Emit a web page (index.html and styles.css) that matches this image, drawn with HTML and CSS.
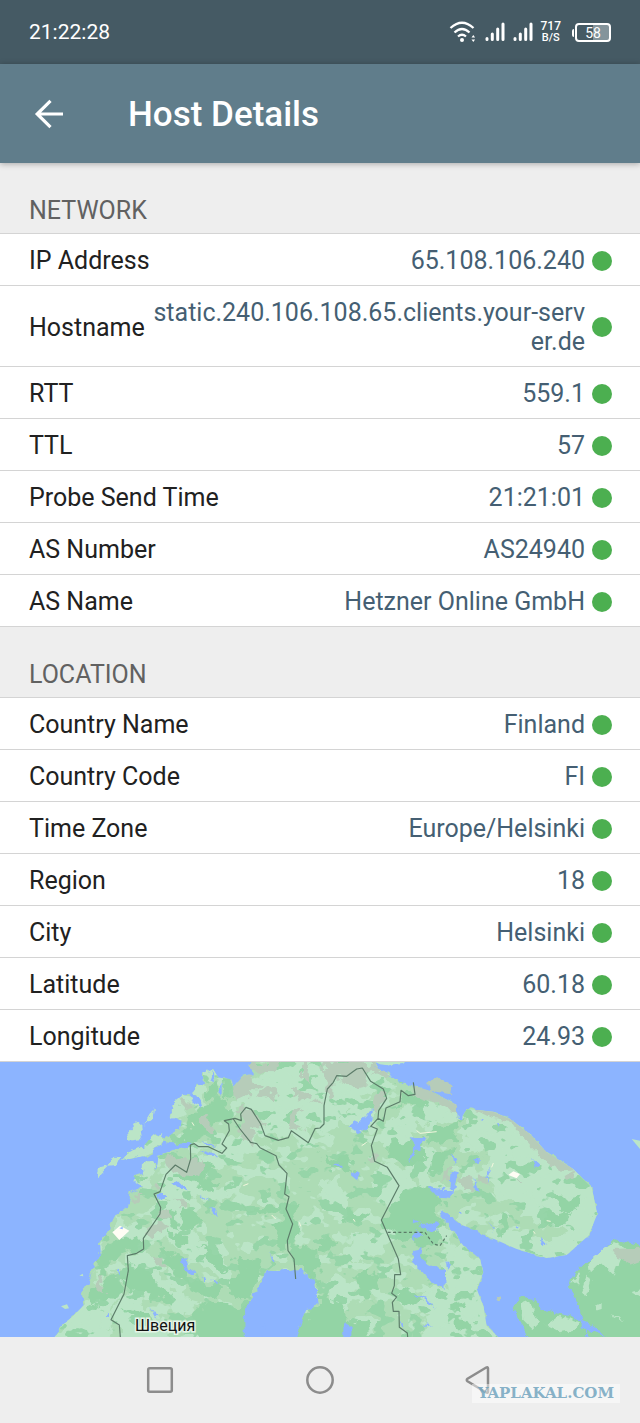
FILE: index.html
```html
<!DOCTYPE html>
<html lang="en">
<head>
<meta charset="utf-8">
<meta name="viewport" content="width=device-width, initial-scale=1">
<title>Host Details</title>
<link rel="stylesheet" href="styles.css">
</head>
<body>
<div class="screen">
  <div class="status-bar">
    <time class="clock">21:22:28</time>
    <div class="status-icons">
      <svg class="wifi" width="28" height="24" viewBox="0 0 28 24" fill="none" stroke="#fff" stroke-width="2.3" aria-label="Wi-Fi">
        <path d="M1.500 8Q13 -2.500 24.500 8M5.500 12.500Q13 5.500 20.500 12.500M9 16.500Q13 13 17 16.500"/>
        <circle cx="13" cy="20" r="2" fill="#fff" stroke="none"/>
        <path d="M22.500 17.500l1.800-2.500 1.800 2.500zM22.500 19.500l1.800 2.500 1.800-2.500z" fill="#fff" stroke="none"/>
      </svg>
      <svg class="signal" width="20" height="20" viewBox="0 0 20 20" stroke="#fff" stroke-width="3" stroke-linecap="round" aria-label="Signal 1"><path d="M2 16.500v1M7.300 12v5.500M12.700 7v10.500M18 2v15.500"/></svg>
      <svg class="signal" width="20" height="20" viewBox="0 0 20 20" stroke="#fff" stroke-width="3" stroke-linecap="round" aria-label="Signal 2"><path d="M2 16.500v1M7.300 12v5.500M12.700 7v10.500M18 2v15.500"/></svg>
      <div class="speed"><span>717</span><span class="unit">B/S</span></div>
      <div class="battery"><span>58</span></div>
    </div>
  </div>

  <header class="app-bar">
    <button class="back" type="button" aria-label="Back">
      <svg width="30" height="30" viewBox="0 0 30 30" fill="none" stroke="#fff" stroke-width="3.200"><path d="M29 15H3M16.500 1.800L3.200 15l13.300 13.200"/></svg>
    </button>
    <h1>Host Details</h1>
  </header>

  <main>
    <section>
      <h2>NETWORK</h2>
      <dl>
        <div class="row"><dt>IP Address</dt><dd>65.108.106.240</dd></div>
        <div class="row"><dt>Hostname</dt><dd>static.240.106.108.65.clients.your-server.de</dd></div>
        <div class="row"><dt>RTT</dt><dd>559.1</dd></div>
        <div class="row"><dt>TTL</dt><dd>57</dd></div>
        <div class="row"><dt>Probe Send Time</dt><dd>21:21:01</dd></div>
        <div class="row"><dt>AS Number</dt><dd>AS24940</dd></div>
        <div class="row"><dt>AS Name</dt><dd>Hetzner Online GmbH</dd></div>
      </dl>
    </section>
    <section>
      <h2>LOCATION</h2>
      <dl>
        <div class="row"><dt>Country Name</dt><dd>Finland</dd></div>
        <div class="row"><dt>Country Code</dt><dd>FI</dd></div>
        <div class="row"><dt>Time Zone</dt><dd>Europe/Helsinki</dd></div>
        <div class="row"><dt>Region</dt><dd>18</dd></div>
        <div class="row"><dt>City</dt><dd>Helsinki</dd></div>
        <div class="row"><dt>Latitude</dt><dd>60.18</dd></div>
        <div class="row"><dt>Longitude</dt><dd>24.93</dd></div>
      </dl>
    </section>
    <div class="map">
      <svg viewBox="0 9 1920 825" preserveAspectRatio="xMidYMid slice" role="img" aria-label="Map of northern Scandinavia">
        <defs>
          <!-- uneven natural edges -->
          <filter id="rough" filterUnits="userSpaceOnUse" x="0" y="0" width="1920" height="850" color-interpolation-filters="sRGB">
            <feTurbulence type="fractalNoise" baseFrequency="0.025" numOctaves="3" seed="4"/>
            <feDisplacementMap in="SourceGraphic" scale="60" xChannelSelector="R" yChannelSelector="G"/>
          </filter>
          <filter id="coast" filterUnits="userSpaceOnUse" x="0" y="0" width="1920" height="850" color-interpolation-filters="sRGB">
            <feTurbulence type="fractalNoise" baseFrequency="0.05" numOctaves="2" seed="9"/>
            <feDisplacementMap in="SourceGraphic" scale="22" xChannelSelector="R" yChannelSelector="G"/>
          </filter>
          <!-- scattered vegetation patches inside the land -->
          <filter id="meadow" filterUnits="userSpaceOnUse" x="0" y="0" width="1920" height="850" color-interpolation-filters="sRGB">
            <feTurbulence type="fractalNoise" baseFrequency="0.016 0.022" numOctaves="3" seed="12"/>
            <feColorMatrix values="0 0 0 0 .733  0 0 0 0 .898  0 0 0 0 .78  30 0 0 0 -17"/>
            <feComposite in2="SourceAlpha" operator="in"/>
          </filter>
          <filter id="forest" filterUnits="userSpaceOnUse" x="0" y="0" width="1920" height="850" color-interpolation-filters="sRGB">
            <feTurbulence type="fractalNoise" baseFrequency="0.018 0.026" numOctaves="3" seed="31"/>
            <feColorMatrix values="0 0 0 0 .588  0 0 0 0 .835  0 0 0 0 .66  0 30 0 0 -18"/>
            <feComposite in2="SourceAlpha" operator="in"/>
          </filter>
          <path id="land" d="M155 840L185 800 220 770 255 735 245 705 268 660 285 612 302 590 300 552 330 510 345 470 385 440 392 402 430 385 412 370 400 350 432 340 430 318 460 305 470 330 475 290 520 272 490 268 440 290 400 298 365 305 385 280 430 262 460 225 490 240 540 210 545 185 512 172 520 130 545 110 575 112 590 80 612 70 608 45 640 30 655 55 690 60 700 85 730 50 762 45 745 20 770 0H1125L1130 20 1195 65 1240 80 1290 95 1375 140 1380 185 1400 150 1480 158 1530 180 1590 225 1640 280 1720 330 1775 385 1792 465 1765 530 1700 588 1640 597 1550 570 1460 530 1390 500 1330 455 1318 465 1360 515 1390 560 1440 600 1450 640 1430 690 1450 740 1460 800 1500 840Z"/>
          <clipPath id="inland"><use href="#land"/></clipPath>
        </defs>
        <rect y="0" width="1920" height="840" fill="#8cb4ff"/>
        <use href="#land" fill="#addcb5" filter="url(#coast)"/>
        <!-- light lowlands -->
        <g fill="#bbe5c7" filter="url(#coast)">
          <path d="M520 130L545 108 568 130 556 165 512 180zM590 85L610 70 600 108 570 110zM610 42L640 30 652 60 625 70zM400 200L420 190 425 240 385 245 378 225zM430 200L462 148 458 180zM290 355L300 325 325 318zM325 320L340 290 362 292 350 318zM365 305L385 280 430 262 490 225 480 258 430 290zM425 320L460 305 466 340 435 385 400 365 430 345z"/>
        </g>
        <g clip-path="url(#inland)">
          <g fill="#bbe5c7" filter="url(#rough)">
            <path d="M760 60L850 0 1120 0 1180 60 1180 90 1110 110 1040 150 1020 215 960 235 930 200 840 240 800 220 780 170 700 135 730 80zM690 230L740 220 810 260 730 300 650 330 600 300zM500 300L560 310 570 340 620 390 700 400 660 430 560 400 500 420 480 370z"/>
            <path d="M480 410L560 440 600 480 580 520 640 590 710 650 690 690 620 620 560 590 500 540 430 560 450 500zM385 590L430 570 500 620 470 640 540 710 600 730 560 760 480 700 410 660 430 740 520 800 500 850H390L330 780 380 700zM270 710L340 670 360 720 320 780 345 850H160L240 750zM340 480L370 460 385 500 420 490 405 560 350 540zM280 640L300 612 315 650 300 700zM318 620L345 612 350 640 330 655z"/>
            <path d="M1390 140L1490 140 1600 220 1650 280 1740 325 1800 390 1810 470 1780 540 1690 610 1630 610 1530 580 1455 525 1480 500 1580 530 1650 550 1710 520 1640 490 1560 470 1550 430 1490 410 1450 340 1470 290 1390 260 1400 200z"/>
            <path d="M1260 120L1370 150 1380 180 1320 170 1280 200 1230 190 1240 230 1180 270 1140 240 1150 190zM1070 120L1130 150 1120 210 1060 220 1030 180zM1150 310L1230 350 1250 400 1200 470 1160 440 1120 370zM960 370L1010 360 1060 430 1020 480 970 450zM1330 590L1380 560 1460 605 1460 640 1440 690 1460 740 1490 850H1260L1290 770 1240 760 1280 700 1340 680zM1000 650L1070 670 1070 730 1030 760 990 720zM1240 260L1310 280 1330 330 1280 350zM1050 530L1110 520 1150 570 1100 610 1040 590z"/>
          </g>
          <use href="#land" filter="url(#meadow)"/>
          <use href="#land" filter="url(#forest)"/>
          <!-- forests -->
          <g fill="#93d4a5" filter="url(#rough)">
            <path d="M590 140L650 120 700 150 680 190 620 200 600 240 530 255 540 220 575 190zM620 85L650 70 655 110 625 120zM665 60L690 50 690 100 670 130zM580 300L650 320 610 360 670 380 640 400 560 370 520 350zM545 460L590 455 610 490 580 510 545 495zM310 560L350 545 410 545 405 575 360 590 315 610 320 660 290 650 300 590zM380 620L440 630 470 680 520 710 500 730 440 700 380 690zM370 740L430 760 470 800 410 790zM320 665L355 650 370 680 330 720 260 740 270 700zM730 440L780 460 800 435 850 440 830 465 780 475zM480 570L545 600 570 660 520 640zM590 560L650 600 690 650 640 620zM560 650L660 690 650 720 580 690zM480 440L520 460 535 500 500 490zM490 505L560 550 530 560z"/>
            <path d="M700 585L790 610 790 640 745 720 720 720 690 670 720 640zM860 440L900 430 880 480 905 520 870 550 955 565 960 680 925 650 880 600 850 540zM600 730L650 745 740 740 750 850H600L580 780zM915 770L960 745V850H885zM820 500L870 480 860 540 840 580z"/>
            <path d="M1165 250L1240 240 1280 290 1240 320 1165 290zM1210 400L1280 380 1330 430 1290 460 1340 490 1300 500 1340 550 1270 560 1190 530 1150 490 1170 450zM1340 190L1385 180 1370 245 1290 260 1280 230zM1300 285L1370 270 1330 330 1290 345zM1215 95L1290 100 1270 140 1190 145zM960 280L1040 300 1050 340 990 320zM1030 450L1110 470 1080 490 1030 480zM1220 690L1270 720 1250 750 1190 720zM960 700L1020 740 1040 780 1100 790 1110 850H960zM960 540L1010 550 990 580 960 570zM1350 740L1400 730 1380 760zM1060 650L1120 640 1140 690 1090 710zM1370 780L1425 790 1420 820 1370 810zM1505 465L1530 480 1510 525 1500 505zM1630 475L1710 460 1700 490 1640 500zM1660 420L1740 410 1730 450 1690 460z"/>
          </g>
          <!-- highlands -->
          <g fill="#b6ccb9" filter="url(#rough)">
            <path d="M725 9L840 9 820 40 780 38zM700 75L740 50 780 80 740 120 700 110zM715 160L760 150 800 205 750 205 760 260 725 260 735 225zM775 95L800 85 830 100 820 130 805 120 800 105 775 110zM865 155L910 150 885 185 915 200 890 225 855 210zM870 85L910 90 935 110 905 125 890 100 870 120zM900 15L920 9 930 65 900 50zM930 130L955 120 955 145zM490 300L530 290 560 310 590 310 620 300 605 350 550 345 510 330zM520 410L555 415 570 445 535 460zM470 440L515 455 510 480 475 470zM455 490L500 495 460 540 430 535zM290 640L308 670 305 700 290 690zM460 590L500 600 490 612 465 605zM390 410L425 405 400 430zM605 190L625 185 640 205 620 230zM540 135L560 125 550 150zM470 375L490 385 470 400z"/>
            <path d="M965 20L1000 12 1100 9 1200 0 1200 30 1150 50 1100 30 1100 80 1060 90 1040 60 1000 75 1000 110 980 120 975 60zM1325 345L1350 330 1345 365 1325 370zM1375 355L1410 350 1420 385 1380 390zM1435 340L1460 350 1450 380 1430 370zM1540 370L1570 375 1560 385zM1090 290L1120 280 1115 310zM1120 120L1155 115 1135 155z"/>
          </g>
          <path fill="#b6ccb9" filter="url(#coast)" d="M1240 70L1290 82 1375 125 1380 170 1330 140 1240 110zM1400 140L1490 148 1590 215 1640 270 1730 330 1680 335 1640 310 1590 260 1530 185 1470 175zM1690 345L1725 335 1720 360 1695 362z"/>
        </g>
        <path fill="#b6ccb9" filter="url(#coast)" d="M1285 75L1310 52 1355 80 1350 105 1290 95z"/>
        <!-- islands and eastern shore -->
        <path fill="#bbe5c7" d="M183 742l18-6 6 12-12 2zM238 650l10-6 2 8zM1895 240l25 5v25z"/>
        <path fill="#bbe5c7" d="M1125 9H1215L1200 24 1140 16z"/>
        <g filter="url(#coast)">
          <path fill="#93d4a5" d="M1710 680L1720 645 1760 605 1800 590 1840 543 1880 552 1940 565V850H1780L1750 795 1735 740zM1538 750L1560 712 1600 720 1625 750 1700 770 1745 785 1770 850H1590L1560 790z"/>
          <path fill="#bbe5c7" d="M1765 610L1840 550 1880 570 1860 600 1840 650 1800 610 1770 640zM1715 665L1740 640 1735 680zM1745 690L1760 650 1775 660 1760 715zM1565 735L1590 725 1600 760 1620 790 1600 810 1570 780zM1640 800L1680 770 1740 790 1720 812 1680 820zM1788 740l17-8v18l-18 5zM1830 767l42 14-14 2zM1890 700l40-8v22z"/>
          <path fill="#b6ccb9" d="M1835 570L1940 565 1930 605 1890 620 1860 600zM1490 715l12-3 2 12-8 6z"/>
        </g>
        <!-- water -->
        <g fill="#8cb4ff" filter="url(#coast)">
          <path d="M735 850L732 755 770 690 792 650 795 632 850 634 905 630 945 665 950 710 953 738 920 750 905 785 885 850zM1125 25L1240 65 1205 12zM1045 205L1070 188 1095 175 1118 148 1118 185 1100 210 1075 225 1065 212zM1052 345L1070 335 1084 345 1070 360zM995 317L1018 317 1030 328z"/>
          <path d="M545 600L560 598 565 625 590 645 570 645 550 625zM605 650l14 10-5 12zM638 660l17 15-15-2zM625 440L645 455 658 475 635 460zM515 370L530 360 565 395 530 385zM595 272L625 280 655 292 620 290zM600 407l30 18-25-8zM608 245l48 20-35-6zM315 770l15-12v18zM450 740l25 35-8-2zM470 405h30l-20 18zM490 700l25 10zM780 345l14 16zM810 580l15 35-8-5zM350 630l10-5-5 25z"/>
          <path d="M1228 235L1280 238 1262 255 1265 270 1250 280 1225 312 1245 260zM1358 290l14 10-8 15zM1355 335l18 5-12 60-10-10zM1420 350l20 48-15-3zM1423 300h16v8h-20zM1465 330l8 10-12 30zM1285 385l55 6-6 7 28 2-22 18-30-2zM1235 480l30 10-25 6zM1255 500l60-10v25l-20 3zM1235 540l10-30 25 20zM1238 570l30-5-5 30 22 20 50 20 2 55-45-25-25-30-25-20zM1338 607l15 13-12 15zM1240 708l40 8 25 30-35-25zM1265 795l35 3-20 5zM1360 665l12 8zM1445 185h10l-6 8zM1490 190h8v16zM1600 300l22 20-15 5zM1618 550l5-10 16 17zM1030 790l22 15-2 45h-20zM1205 790l10 5-5 15zM1465 485l12 20 2 15zM1545 505l12-2-7 8zM1375 460l8-2 2 12zM630 60l10-30 5 40zM680 40l20-31v60zM655 100l10-30v40zM570 100l12 35 25 10-10-35zM780 798l15-5-5 47zM1745 785l45 20 30 32-75-35zM490 248l45 8 40-8-10 18-60 8-60 20zM1372 120l10 5 2 60-8-5z"/>
        </g>
        <path d="M337 520L360 500 388 515 358 543zM1525 348L1540 337 1560 345 1550 358z" fill="#fffdf4"/>
        <path d="M358 508l10-5v8z" fill="#8cb4ff"/>
        <path d="M576 190l6 10M815 468l12 12M898 490l4 12M1250 215l10 8 50-5M1475 325l5-13M1085 260l15-10M1640 485l12 2M1600 517l5 7M1060 480l5 8M730 380l15-6" stroke="#f5f8df" stroke-width="3" fill="none"/>
        <!-- borders -->
        <g fill="none" stroke="#5c7c69" stroke-width="3.500" stroke-linejoin="round">
          <path d="M361 834L358 798 333 782 372 705 385 635 382 590 410 583 431 570 430 538 480 465 482 445 462 405 480 398 498 346 526 318 560 340 572 300 571 258 583 254 596 263 625 263 666 283 680 267 666 255 688 215 686 195 673 185 705 178 724 185 722 165 738 145 754 151 782 195 795 230 835 244 865 236 874 215 925 251 945 209 960 207 972 195 972 140 982 90 1000 70 1010 50 1040 52 1070 30 1087 27 1112 67 1150 90 1160 118 1136 155 1134 178 1150 187 1158 147 1200 128 1203 94 1225 110 1245 106 1240 70M1134 178L1112 202 1132 210 1114 260 1124 307 1162 325 1197 380 1144 483 1195 600 1202 647 1184 647 1183 680 1175 703 1190 714 1177 730 1180 757 1197 757 1198 805 1222 822 1223 834"/>
          <path d="M700 180L720 210 752 250 770 254 780 266 828 290 837 318 861 343 854 405 867 413 858 450 878 495 862 545 864 575 882 600 887 660"/>
          <path d="M1163 520H1275L1300 555 1320 560 1340 530" stroke-dasharray="9 7"/>
        </g>
        <text class="map-label" x="405" y="816">Швеция</text>
      </svg>
    </div>
  </main>

  <nav class="nav-bar" aria-label="System navigation">
    <button type="button" aria-label="Recent apps"><svg width="30" height="30" viewBox="0 0 30 30"><rect x="3.200" y="3.200" width="23.600" height="23.600" rx="1.500"/></svg></button>
    <button type="button" aria-label="Home"><svg width="30" height="30" viewBox="0 0 30 30"><circle cx="15" cy="15" r="12.700"/></svg></button>
    <button type="button" aria-label="Go back"><svg width="30" height="30" viewBox="0 0 30 30"><path d="M21.200 2.500Q23 1.500 23 3.500V26.500Q23 28.500 21.200 27.500L2.500 16.200Q1 15 2.500 13.800Z"/></svg></button>
    <span class="watermark">YAPLAKAL.COM</span>
  </nav>
</div>
</body>
</html>
```
FILE: styles.css
```css
* { box-sizing: border-box; }

body {
  margin: 0;
  background: #eee;
  color: #212121;
  font-family: Roboto, "Noto Sans", sans-serif;
  font-size: 25px;
  line-height: 29px;
}

h1, h2, dl, dd { margin: 0; }

button {
  display: flex;
  padding: 0;
  border: 0;
  background: none;
}

.screen {
  display: flex;
  flex-direction: column;
  min-height: 100vh;
}

.status-bar {
  display: flex;
  align-items: center;
  justify-content: space-between;
  height: 64px;
  padding: 0 29px;
  background: #455a64;
  color: #fff;
}

.clock { font-size: 21px; }

.status-icons {
  display: flex;
  align-items: center;
  gap: 8px;
}

.speed {
  display: flex;
  flex-direction: column;
  align-items: center;
  font-size: 12px;
  font-weight: 500;
  line-height: 11px;
}

.unit { font-size: 11px; }

.battery {
  position: relative;
  width: 36px;
  height: 19px;
  margin-left: 6px;
  border: 2px solid #fff;
  border-radius: 4px;
  background: linear-gradient(90deg, #455a64 50%, #84949b 50%);
  font-size: 14px;
  line-height: 16px;
  text-align: center;
}

.battery::before {
  content: "";
  position: absolute;
  left: -5px;
  top: 4px;
  width: 2px;
  height: 8px;
  border-radius: 2px 0 0 2px;
  background: #fff;
}

.app-bar {
  position: relative;
  display: flex;
  align-items: center;
  gap: 64px;
  height: 99px;
  padding: 0 34px;
  background: #607d8b;
  box-shadow: 0 1px 6px rgba(0, 0, 0, .3);
  color: #fff;
}

.app-bar h1 {
  padding-top: 2px;
  font-size: 35px;
  font-weight: 500;
  line-height: 44px;
}

h2 {
  padding: 33px 29px 8px;
  border-bottom: 1px solid #d4d4d4;
  color: #616161;
  font-size: 25px;
  font-weight: 400;
}

.row {
  display: flex;
  align-items: center;
  gap: 7px;
  padding: 12px 28px 10px 29px;
  border-bottom: 1px solid #d4d4d4;
  background: #fff;
}

.row dt { white-space: nowrap; }

.row dd {
  flex: 1;
  color: #455f73;
  text-align: right;
  word-break: break-all;
}

.row::after {
  content: "";
  flex: none;
  width: 20px;
  height: 20px;
  border-radius: 50%;
  background: #4caf50;
}

.map svg {
  display: block;
  width: 100%;
}

.map-label {
  fill: #111;
  stroke: #e4f3e6;
  stroke-width: 9px;
  paint-order: stroke;
  font-size: 48px;
}

.nav-bar {
  position: relative;
  display: flex;
  flex: 1;
  align-items: center;
  min-height: 85px;
  padding: 0 12.5%;
  background: #eee;
}

.nav-bar button {
  flex: 1;
  justify-content: center;
}

.nav-bar svg {
  fill: none;
  stroke: #8c8c8c;
  stroke-width: 2.5px;
}

.watermark {
  position: absolute;
  right: 20px;
  bottom: 20px;
  padding: 0 6px;
  background: rgba(255, 255, 255, .45);
  color: rgba(104, 158, 187, .8);
  font-family: "DejaVu Serif", serif;
  font-size: 15px;
  font-weight: 700;
  line-height: 19px;
}
```
